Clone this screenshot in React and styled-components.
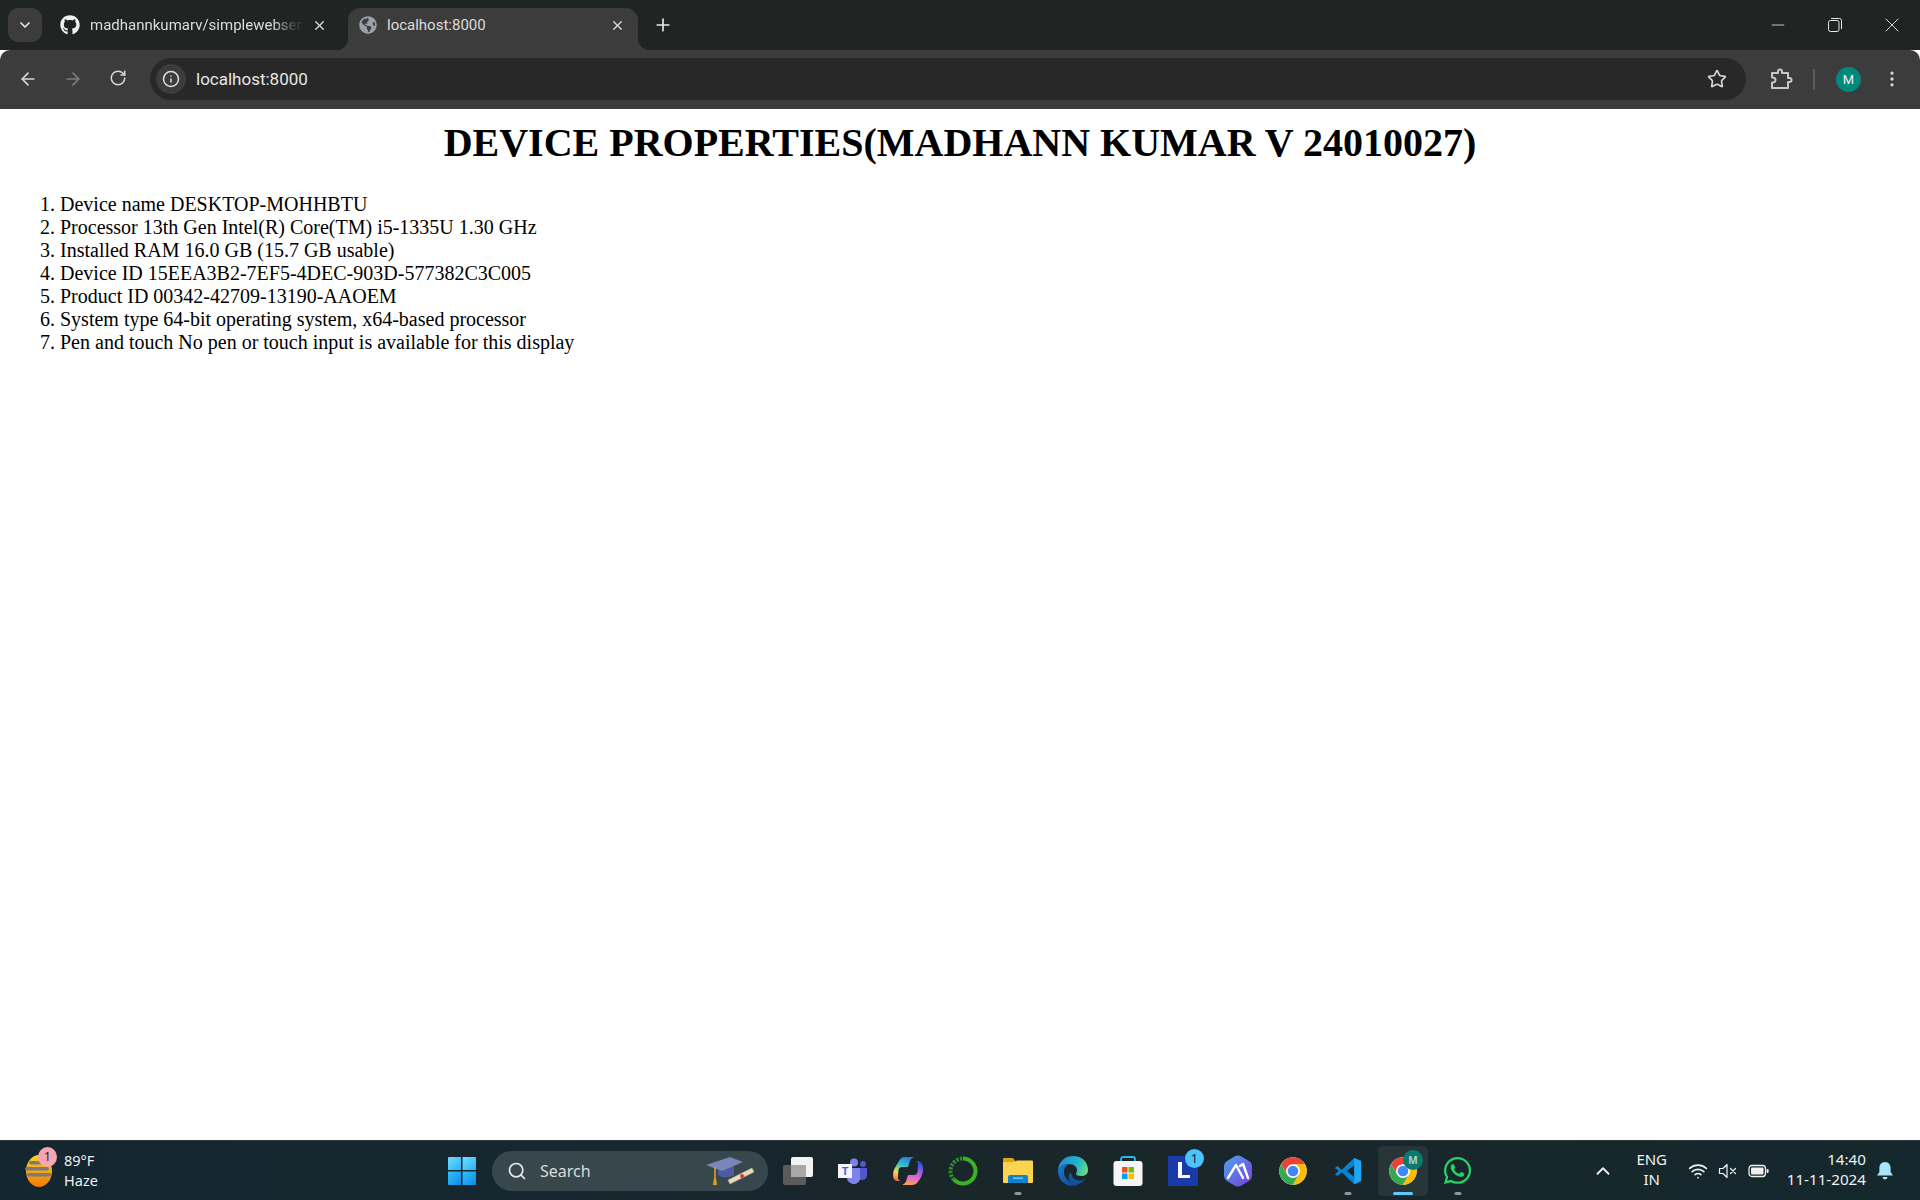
import React from 'react';
import styled, { createGlobalStyle } from 'styled-components';
import {
  ChevronDown, ChevronUp, X, Plus, ArrowLeft, ArrowRight, RotateCw, Info, Star,
  EllipsisVertical, Minus, Search as SearchIcon, Wifi,
} from 'lucide-react';
import { FaGithub, FaGlobeAmericas, FaWhatsapp } from 'react-icons/fa';

const GlobalStyle = createGlobalStyle`
  html, body {
    margin: 0;
    padding: 0;
    background: #ffffff;
    overflow: hidden;
  }
`;

const Screen = styled.div`
  width: 1920px;
  height: 1200px;
  display: flex;
  flex-direction: column;
  overflow: hidden;
`;

/* ---------- browser chrome ---------- */
const TabStrip = styled.div`
  height: 50px;
  flex: none;
  display: flex;
  align-items: flex-end;
  background: #202423;
  font-family: Roboto, "Liberation Sans", sans-serif;
  font-size: 15px;
  color: #dcdcdc;
`;
const TabGroupBtn = styled.div`
  width: 34px;
  height: 34px;
  margin: 0 2px 8px 8px;
  border-radius: 10px;
  background: #3c3c3c;
  display: flex;
  align-items: center;
  justify-content: center;
  color: #e8e8e8;
`;
const Tab = styled.div`
  position: relative;
  height: 42px;
  flex: none;
  width: ${(p) => p.$width}px;
  margin-right: ${(p) => (p.$active ? 0 : 8)}px;
  box-sizing: border-box;
  display: flex;
  align-items: center;
  gap: 10px;
  padding: 0 13px 8px ${(p) => p.$pad}px;
  border-radius: 12px 12px 0 0;
  background: ${(p) => (p.$active ? '#3c3c3c' : 'transparent')};
  ${(p) => p.$active && `
    &::before, &::after {
      content: "";
      position: absolute;
      bottom: 0;
      width: 12px;
      height: 12px;
    }
    &::before {
      left: -12px;
      background: radial-gradient(circle at 0 0, transparent 12px, #3c3c3c 12.5px);
    }
    &::after {
      right: -12px;
      background: radial-gradient(circle at 100% 0, transparent 12px, #3c3c3c 12.5px);
    }
  `}
`;
const TabTitle = styled.div`
  flex: 1;
  min-width: 0;
  white-space: nowrap;
  ${(p) => p.$fade && `
    -webkit-mask-image: linear-gradient(to right, #000 86%, rgba(0,0,0,0.15) 97%);
    mask-image: linear-gradient(to right, #000 86%, rgba(0,0,0,0.15) 97%);
  `}
`;
const NewTab = styled.div`
  width: 30px;
  height: 34px;
  margin: 0 0 8px 10px;
  display: flex;
  align-items: center;
  justify-content: center;
  color: #e8e8e8;
`;
const WindowControls = styled.div`
  margin-left: auto;
  height: 50px;
  display: flex;
  align-self: flex-start;
`;
const WindowBtn = styled.div`
  width: 57px;
  padding-bottom: 1px;
  display: flex;
  align-items: center;
  justify-content: center;
  color: #e6e6e6;
`;

const Toolbar = styled.div`
  height: 59px;
  flex: none;
  box-sizing: border-box;
  display: flex;
  align-items: center;
  padding: 0 12px 1px 0;
  background: #3c3c3c;
  border-radius: 10px 10px 0 0;
  position: relative;
`;
const NavBtn = styled.div`
  width: ${(p) => p.$width || 45}px;
  display: flex;
  justify-content: center;
  color: ${(p) => p.$color || '#d6d6d6'};
`;
const NavGroup = styled.div`
  display: flex;
  width: 150px;
  padding-left: 5px;
  box-sizing: border-box;
`;
const Omnibox = styled.div`
  width: 1596px;
  height: 42px;
  flex: none;
  box-sizing: border-box;
  display: flex;
  align-items: center;
  padding: 0 19px 0 0;
  border-radius: 21px;
  background: #282828;
`;
const SiteInfo = styled.div`
  width: 30px;
  height: 30px;
  margin-left: 6px;
  border-radius: 50%;
  background: #3c3c3c;
  display: flex;
  align-items: center;
  justify-content: center;
  color: #e0e0e0;
`;
const Url = styled.div`
  margin-left: 10px;
  flex: 1;
  font-family: Roboto, "Liberation Sans", sans-serif;
  font-size: 17px;
  color: #e6e6e6;
`;
const ToolbarRight = styled.div`
  display: flex;
  align-items: center;
  padding-left: 23px;
`;
const Divider = styled.div`
  width: 2px;
  height: 21px;
  margin: 0 21px 0 20px;
  background: #5c5c5c;
`;
const Avatar = styled.div`
  width: 25px;
  height: 25px;
  border-radius: 50%;
  background: #00897b;
  color: #f2f2f2;
  display: flex;
  align-items: center;
  justify-content: center;
  font-family: Roboto, "Liberation Sans", sans-serif;
  font-size: 13px;
  margin-right: 21px;
`;

/* ---------- page ---------- */
const Page = styled.main`
  flex: 1;
  min-height: 0;
  box-sizing: border-box;
  padding: 10px 10px 0;
  background: #ffffff;
  color: #000000;
  font-family: "Liberation Serif", "Times New Roman", serif;
  font-size: 20px;
`;
const Heading = styled.h1`
  margin: 0 0 27px;
  font-size: 40px;
  font-weight: bold;
  text-align: center;
`;
const PropList = styled.ol`
  margin: 0;
  padding-left: 50px;
`;

/* ---------- taskbar ---------- */
const Taskbar = styled.footer`
  height: 60px;
  flex: none;
  box-sizing: border-box;
  display: flex;
  align-items: center;
  background: linear-gradient(90deg, #14262f 0%, #16272f 30%, #1a2629 55%, #14282d 100%);
  border-top: 1px solid #2c3639;
  font-family: "Noto Sans", "Open Sans", sans-serif;
  color: #f0f0f0;
`;
const Weather = styled.div`
  width: 442px;
  flex: none;
  box-sizing: border-box;
  padding-left: 24px;
  display: flex;
  align-items: center;
  gap: 10px;
`;
const WeatherIcon = styled.div`
  position: relative;
  width: 30px;
  height: 36px;
  display: flex;
`;
const PinkBadge = styled.span`
  position: absolute;
  top: -6px;
  left: 14px;
  width: 19px;
  height: 20px;
  border-radius: 50%;
  background: #f8a5b2;
  color: #2a1d20;
  font-size: 12px;
  display: flex;
  align-items: center;
  justify-content: center;
`;
const WeatherText = styled.div`
  font-size: 14.5px;
  line-height: 20px;
  padding-bottom: 2px;
`;
const StartBtn = styled.div`
  width: 40px;
  flex: none;
  display: flex;
  justify-content: center;
`;
const SearchBox = styled.div`
  width: 276px;
  height: 40px;
  flex: none;
  margin-left: 10px;
  box-sizing: border-box;
  padding: 0 14px 0 15px;
  display: flex;
  align-items: center;
  gap: 13px;
  border-radius: 20px;
  background: #37474c;
  font-size: 16px;
  color: #d8dcdc;
`;
const SearchLabel = styled.span`
  flex: 1;
`;
const Apps = styled.div`
  display: flex;
  align-items: stretch;
  height: 50px;
  margin-left: 2px;
`;
const AppBtn = styled.div`
  position: relative;
  width: 55px;
  flex: none;
  display: flex;
  align-items: center;
  justify-content: center;
  &::before {
    content: "";
    position: absolute;
    inset: 0 2.5px;
    border-radius: 5px;
    background: ${(p) => (p.$active ? 'rgba(255,255,255,0.07)' : 'transparent')};
  }
  svg {
    position: relative;
  }
`;
const Pip = styled.span`
  position: absolute;
  bottom: 1px;
  left: 50%;
  transform: translateX(-50%);
  width: ${(p) => (p.$active ? 20 : 7)}px;
  height: 3px;
  border-radius: 2px;
  background: ${(p) => (p.$active ? '#5fc8f5' : '#8d9597')};
`;
const CountBadge = styled.span`
  position: absolute;
  top: 3px;
  right: 6px;
  width: 19px;
  height: 19px;
  border-radius: 50%;
  background: #4cc2ff;
  color: #10222a;
  font-size: 12px;
  display: flex;
  align-items: center;
  justify-content: center;
`;
const ProfileBadge = styled.span`
  position: absolute;
  top: 4px;
  right: 7px;
  width: 20px;
  height: 20px;
  border-radius: 50%;
  background: #0b7a6e;
  color: #b9e0d8;
  font-size: 10px;
  font-weight: 600;
  display: flex;
  align-items: center;
  justify-content: center;
`;
const Tray = styled.div`
  margin-left: auto;
  display: flex;
  align-items: center;
  padding-right: 26px;
`;
const TrayUp = styled.div`
  width: 30px;
  display: flex;
  justify-content: center;
  color: #f0f0f0;
  margin-right: 11px;
`;
const Lang = styled.div`
  width: 46px;
  font-size: 15px;
  line-height: 20px;
  text-align: center;
  margin-right: 13px;
  padding-bottom: 4px;
`;
const TrayIcons = styled.div`
  display: flex;
  align-items: center;
  gap: 10px;
  color: #f0f0f0;
  margin-right: 18px;
`;
const Clock = styled.div`
  font-size: 15.2px;
  line-height: 20px;
  text-align: right;
  margin-right: 10px;
  padding-bottom: 4px;
`;

/* ---------- drawn icons ---------- */
const PuzzleIcon = () => (
  <svg width="24" height="24" viewBox="0 0 24 24" fill="none" stroke="#c8c8c8" strokeWidth="2" strokeLinejoin="round">
    <path d="M3 6h6V4.5a2 2 0 0 1 4 0V6h6v5h1.5a2 2 0 0 1 0 4H19v6H3v-5.5h1a2.5 2.5 0 0 0 0-5H3z" />
  </svg>
);

const Battery = () => (
  <svg width="21" height="14" viewBox="0 0 21 14" fill="none">
    <rect x="1" y="1.5" width="16.5" height="11" rx="3" stroke="#f0f0f0" strokeWidth="1.3" />
    <rect x="3" y="3.5" width="12.5" height="7" rx="1" fill="#f0f0f0" />
    <rect x="18.6" y="5" width="2" height="4" rx="1" fill="#f0f0f0" />
  </svg>
);

const Muted = () => (
  <svg width="20" height="20" viewBox="0 0 20 20" fill="none" stroke="#f0f0f0" strokeWidth="1.2" strokeLinejoin="round">
    <path d="M1.5 7.5h3.5L9 3.5v13l-4-4H1.5z" />
    <path d="M12.5 7.5l5 5M17.5 7.5l-5 5" strokeLinecap="round" />
  </svg>
);

const BellIcon = () => (
  <svg width="18" height="20" viewBox="0 0 18 20">
    <path d="M9 1c3.6 0 5.600 2.800 5.600 6v4l2.400 3.500H1L3.400 11V7C3.400 3.800 5.400 1 9 1z" fill="#a5e4fb" />
    <path d="M6.500 16h5a2.500 2.500 0 0 1-5 0z" fill="#a5e4fb" />
  </svg>
);

const SunHaze = () => (
  <svg width="30" height="36" viewBox="0 0 30 36">
    <defs>
      <linearGradient id="sunGrad" x1="0" y1="0" x2="0" y2="1">
        <stop offset="0" stopColor="#ffd21f" />
        <stop offset="1" stopColor="#f07a08" />
      </linearGradient>
    </defs>
    <ellipse cx="15" cy="18" rx="13" ry="16" fill="url(#sunGrad)" />
    <rect x="5" y="8" width="16" height="3.500" rx="1.700" fill="#7b7b7b" />
    <rect x="1" y="14" width="24" height="3.500" rx="1.700" fill="#7b7b7b" />
    <rect x="3" y="20" width="24" height="3.500" rx="1.700" fill="#7b7b7b" />
  </svg>
);

const GradCap = () => (
  <svg width="48" height="30" viewBox="0 0 48 30">
    <path d="M22 24L46 12l2 4-24 12z" fill="#e8dcc0" stroke="#b9a988" strokeWidth="0.6" />
    <circle cx="36" cy="20" r="2" fill="#d0342c" />
    <path d="M12 9v10c4 3 11 3 16 0V9z" fill="#4f5aa5" />
    <path d="M0 9L24 1l13 5-21 9z" fill="#7a85b8" />
    <path d="M9 11v11" stroke="#d9a520" strokeWidth="1.600" />
    <path d="M8 22h2l1 7H7z" fill="#d9a520" />
  </svg>
);

const WinLogo = () => (
  <svg width="30" height="30" viewBox="0 0 30 30">
    <defs>
      <linearGradient id="winA" x1="0" y1="0" x2="1" y2="1">
        <stop offset="0" stopColor="#6fdcff" />
        <stop offset="1" stopColor="#2cb1f5" />
      </linearGradient>
      <linearGradient id="winB" x1="0" y1="0" x2="1" y2="1">
        <stop offset="0" stopColor="#38bdf8" />
        <stop offset="1" stopColor="#0b8be8" />
      </linearGradient>
    </defs>
    <path d="M1 2a1 1 0 0 1 1-1h12v13H1z" fill="url(#winA)" />
    <path d="M15.500 1H28a1 1 0 0 1 1 1v12H15.500z" fill="url(#winA)" />
    <path d="M1 15.500h13V29H2a1 1 0 0 1-1-1z" fill="url(#winB)" />
    <path d="M15.500 15.500H29V28a1 1 0 0 1-1 1H15.500z" fill="url(#winB)" />
  </svg>
);

const TaskView = () => (
  <svg width="32" height="30" viewBox="0 0 32 30">
    <rect x="1" y="9" width="23" height="20" rx="2" fill="#5b5b5b" />
    <rect x="9" y="1" width="22" height="20" rx="2" fill="#f2f2f2" />
    <rect x="9" y="9" width="15" height="12" fill="#a8a8a8" />
  </svg>
);

const Teams = () => (
  <svg width="30" height="26" viewBox="0 0 30 26">
    <circle cx="16" cy="4.500" r="4" fill="#7b83eb" />
    <circle cx="25" cy="6" r="3" fill="#5059c9" />
    <path d="M20 10h9v7c0 3-2 5-5 5h-4z" fill="#5059c9" />
    <path d="M9 10h13v10c0 3.500-2.500 6-6 6s-7-2.500-7-6z" fill="#7b83eb" />
    <rect x="0" y="6" width="14" height="14" fill="#f4f4fa" />
    <text x="7" y="17" textAnchor="middle" fontSize="11" fontWeight="700" fontFamily="Liberation Sans, sans-serif" fill="#5059c9">T</text>
  </svg>
);

const Copilot = () => (
  <svg width="30" height="30" viewBox="0 0 30 30">
    <defs>
      <linearGradient id="copL" x1="0.6" y1="0" x2="0.3" y2="1">
        <stop offset="0" stopColor="#2b7de9" />
        <stop offset="0.35" stopColor="#35c1c7" />
        <stop offset="0.7" stopColor="#f4dc4a" />
        <stop offset="1" stopColor="#f56b4a" />
      </linearGradient>
      <linearGradient id="copR" x1="0.6" y1="0" x2="0.4" y2="1">
        <stop offset="0" stopColor="#1a4fd8" />
        <stop offset="0.35" stopColor="#8f5be8" />
        <stop offset="0.7" stopColor="#e66ac4" />
        <stop offset="1" stopColor="#f7a24f" />
      </linearGradient>
    </defs>
    <path d="M11 1h10c-3 1-4 3-5 7l-1 3H9c-2 0-3 1-3.500 3L5 20c-.5 3 1 5 4 5H5c-3 0-5-2-5-6 0-3 1-6 3-9l3-5c1-2 3-4 5-4z" fill="url(#copL)" />
    <path d="M19 29H9c3-1 4-3 5-7l1-3h6c2 0 3-1 3.500-3l.5-6c.5-3-1-5-4-5h4c3 0 5 3 5 8 0 3-1 7-3 10l-3 4c-1 1-3 2-5 2z" fill="url(#copR)" />
  </svg>
);

const RingApp = () => (
  <svg width="30" height="30" viewBox="0 0 30 30" fill="none" strokeWidth="4">
    <path d="M15 2.500A12.500 12.500 0 1 1 6 23.700" stroke="#3bb224" />
    <path d="M6 23.700A12.500 12.500 0 0 1 15 2.500" stroke="#2f8f28" strokeDasharray="2.400 1.300" />
  </svg>
);

const Explorer = () => (
  <svg width="30" height="27" viewBox="0 0 30 27">
    <path d="M0 2a1 1 0 0 1 1-1h9l3 4H0z" fill="#dca40f" />
    <path d="M0 5l11 0 3-1.500h15a1 1 0 0 1 1 1V25a1 1 0 0 1-1 1H1a1 1 0 0 1-1-1z" fill="#fcd34f" />
    <path d="M5 20a2 2 0 0 1 2-2h16a2 2 0 0 1 2 2v6H5z" fill="#0e83d2" />
    <rect x="10" y="20.500" width="10" height="1.500" fill="#7cc4ee" />
  </svg>
);

const Edge = () => (
  <svg width="30" height="30" viewBox="0 0 30 30">
    <defs>
      <linearGradient id="edgeTop" x1="0" y1="0.4" x2="1" y2="0.7">
        <stop offset="0" stopColor="#1a8ed8" />
        <stop offset="0.6" stopColor="#22b6c9" />
        <stop offset="1" stopColor="#6fdc7b" />
      </linearGradient>
      <linearGradient id="edgeLow" x1="0" y1="0" x2="1" y2="1">
        <stop offset="0" stopColor="#1a7cd0" />
        <stop offset="1" stopColor="#0a3f90" />
      </linearGradient>
    </defs>
    <path d="M0 15C0 6 7 0 15 0c9 0 15 6 15 14 0 4-3 6-7 6-3 0-5-1-5-2 0-1 1-2 1-4 0-3-3-6-8-6C5 8 1 11 0 15z" fill="url(#edgeTop)" />
    <path d="M0 15c1-4 5-7 11-7-4 2-5 5-5 8 0 6 5 11 12 11 2 0 4-.5 6-1.500-2.500 2.500-5.500 4.500-9 4.500C6 30 0 23 0 15z" fill="url(#edgeLow)" />
    <path d="M14 19c0 3 4 6 9 5.500 2 0 3.500-1 5-3-2 5-8 7.500-12 6-5-1.500-7-7-4-11 0 0 1 1 2 2.500z" fill="#12549f" />
  </svg>
);

const Store = () => (
  <svg width="30" height="30" viewBox="0 0 30 30">
    <path d="M8 6V3a2 2 0 0 1 2-2h10a2 2 0 0 1 2 2v3" fill="none" stroke="#2cb5ea" strokeWidth="1.800" />
    <rect x="0.500" y="5" width="29" height="25" rx="3" fill="#f5f5f5" />
    <rect x="9" y="11" width="5.500" height="5.500" fill="#f25022" />
    <rect x="15.500" y="11" width="5.500" height="5.500" fill="#7fba00" />
    <rect x="9" y="17.500" width="5.500" height="5.500" fill="#00a4ef" />
    <rect x="15.500" y="17.500" width="5.500" height="5.500" fill="#ffb900" />
  </svg>
);

const LApp = () => (
  <svg width="30" height="30" viewBox="0 0 30 30">
    <rect width="30" height="30" fill="#1a3aa8" />
    <path d="M10 6h4v13h8v3H10z" fill="#ffffff" />
  </svg>
);

const HexApp = () => (
  <svg width="30" height="32" viewBox="0 0 30 32">
    <defs>
      <linearGradient id="hexGrad" x1="0" y1="0" x2="1" y2="1">
        <stop offset="0" stopColor="#4aa3ee" />
        <stop offset="1" stopColor="#7a3fdc" />
      </linearGradient>
    </defs>
    <path d="M11.500 1.500a7 7 0 0 1 7 0l7.500 4.500a6 6 0 0 1 3 5v10a6 6 0 0 1-3 5l-7.500 4.500a7 7 0 0 1-7 0L4 26a6 6 0 0 1-3-5V11a6 6 0 0 1 3-5z" fill="url(#hexGrad)" />
    <path d="M5 23l8-13 7 13M17 11l3-2 5 14" fill="none" stroke="#ffffff" strokeWidth="2.400" strokeLinecap="round" strokeLinejoin="round" />
  </svg>
);

const ChromeLogo = () => (
  <svg width="30" height="30" viewBox="0 0 48 48">
    <circle cx="24" cy="24" r="22" fill="#ffffff" />
    <path d="M43.050 13H24A11 11 0 0 0 14.470 29.500L4.950 13A22 22 0 0 1 43.050 13z" fill="#ea4335" />
    <path d="M14.470 29.500L4.950 13A22 22 0 0 0 24 46l9.530-16.500A11 11 0 0 1 14.470 29.500z" fill="#34a853" />
    <path d="M33.530 29.500L24 46A22 22 0 0 0 43.050 13H24A11 11 0 0 1 33.530 29.500z" fill="#fbbc04" />
    <circle cx="24" cy="24" r="8.500" fill="#4285f4" />
  </svg>
);

const VsCode = () => (
  <svg width="30" height="30" viewBox="0 0 48 48">
    <path fillRule="evenodd" d="M34 3L14 22 7 16 3 19l6 5-6 5 4 3 7-6 20 19 11-5V8zM34 15v18L22 24z" fill="#0a84cf" />
    <path d="M34 3l11 5v32l-11 5z" fill="#1ea7f2" />
  </svg>
);

const props = [
  'Device name DESKTOP-MOHHBTU',
  'Processor 13th Gen Intel(R) Core(TM) i5-1335U 1.30 GHz',
  'Installed RAM 16.0 GB (15.7 GB usable)',
  'Device ID 15EEA3B2-7EF5-4DEC-903D-577382C3C005',
  'Product ID 00342-42709-13190-AAOEM',
  'System type 64-bit operating system, x64-based processor',
  'Pen and touch No pen or touch input is available for this display',
];

export default function App() {
  return (
    <Screen>
      <GlobalStyle />
      <TabStrip>
        <TabGroupBtn><ChevronDown size={16} strokeWidth={2.5} /></TabGroupBtn>
        <Tab $width={296} $pad={16}>
          <FaGithub size={20} color="#f2f2f2" />
          <TabTitle $fade>madhannkumarv/simplewebser</TabTitle>
          <X size={15} strokeWidth={2.2} />
        </Tab>
        <Tab $active $width={290} $pad={11}>
          <FaGlobeAmericas size={18} color="#9aa0a6" />
          <TabTitle>localhost:8000</TabTitle>
          <X size={15} strokeWidth={2.2} />
        </Tab>
        <NewTab><Plus size={20} strokeWidth={2} /></NewTab>
        <WindowControls>
          <WindowBtn><Minus size={20} strokeWidth={1} /></WindowBtn>
          <WindowBtn>
            <svg width="14" height="14" viewBox="0 0 14 14" fill="none" stroke="#e6e6e6" strokeWidth="1">
              <rect x="0.500" y="2.500" width="10.500" height="11" rx="2" />
              <path d="M3 .5h8.500a2 2 0 0 1 2 2V11" />
            </svg>
          </WindowBtn>
          <WindowBtn>
            <X size={24} strokeWidth={0.9} />
          </WindowBtn>
        </WindowControls>
      </TabStrip>

      <Toolbar>
        <NavGroup>
          <NavBtn><ArrowLeft size={20} /></NavBtn>
          <NavBtn $color="#7d7d7d"><ArrowRight size={20} /></NavBtn>
          <NavBtn><RotateCw size={18} /></NavBtn>
        </NavGroup>
        <Omnibox>
          <SiteInfo><Info size={18} /></SiteInfo>
          <Url>localhost:8000</Url>
          <Star size={20} color="#d6d6d6" />
        </Omnibox>
        <ToolbarRight>
          <PuzzleIcon />
          <Divider />
          <Avatar>M</Avatar>
          <EllipsisVertical size={20} color="#d6d6d6" />
        </ToolbarRight>
      </Toolbar>

      <Page>
        <Heading>DEVICE PROPERTIES(MADHANN KUMAR V 24010027)</Heading>
        <PropList>
          {props.map((item) => <li key={item}>{item}</li>)}
        </PropList>
      </Page>

      <Taskbar>
        <Weather>
          <WeatherIcon>
            <SunHaze />
            <PinkBadge>1</PinkBadge>
          </WeatherIcon>
          <WeatherText>89°F<br />Haze</WeatherText>
        </Weather>
        <StartBtn><WinLogo /></StartBtn>
        <SearchBox>
          <SearchIcon size={20} color="#e8e8e8" />
          <SearchLabel>Search</SearchLabel>
          <GradCap />
        </SearchBox>
        <Apps>
          <AppBtn><TaskView /></AppBtn>
          <AppBtn><Teams /></AppBtn>
          <AppBtn><Copilot /></AppBtn>
          <AppBtn><RingApp /></AppBtn>
          <AppBtn><Explorer /><Pip /></AppBtn>
          <AppBtn><Edge /></AppBtn>
          <AppBtn><Store /></AppBtn>
          <AppBtn><LApp /><CountBadge>1</CountBadge></AppBtn>
          <AppBtn><HexApp /></AppBtn>
          <AppBtn><ChromeLogo /></AppBtn>
          <AppBtn><VsCode /><Pip /></AppBtn>
          <AppBtn $active><ChromeLogo /><ProfileBadge>M</ProfileBadge><Pip $active /></AppBtn>
          <AppBtn><FaWhatsapp size={31} color="#25d366" /><Pip /></AppBtn>
        </Apps>
        <Tray>
          <TrayUp><ChevronUp size={22} /></TrayUp>
          <Lang>ENG<br />IN</Lang>
          <TrayIcons>
            <Wifi size={20} />
            <Muted />
            <Battery />
          </TrayIcons>
          <Clock>14:40<br />11-11-2024</Clock>
          <BellIcon />
        </Tray>
      </Taskbar>
    </Screen>
  );
}
